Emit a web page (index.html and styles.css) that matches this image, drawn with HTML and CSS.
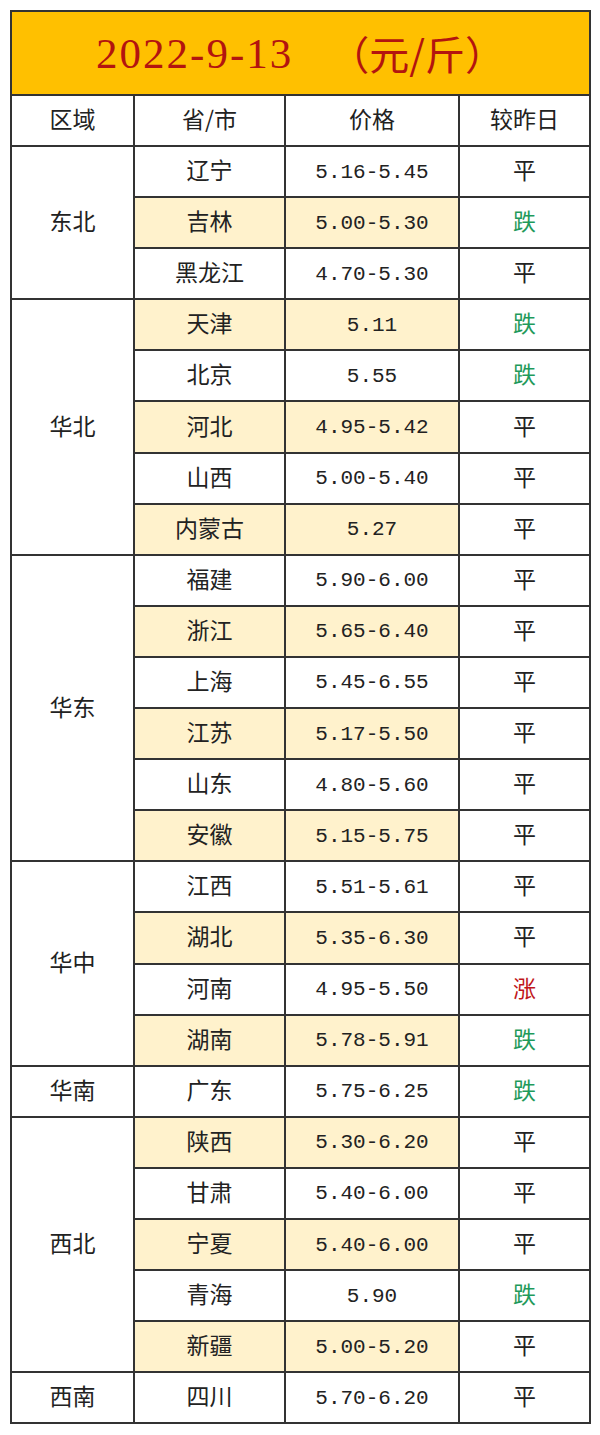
FILE: index.html
```html
<!DOCTYPE html>
<html lang="zh-CN">
<head>
<meta charset="utf-8">
<title>2022-9-13 价格</title>
<link rel="stylesheet" href="styles.css">
</head>
<body>
<table class="price-table">
  <colgroup>
    <col class="c-region">
    <col class="c-prov">
    <col class="c-price">
    <col class="c-change">
  </colgroup>
  <thead>
    <tr class="title-row">
      <th colspan="4"><span class="title"><span class="num">2022-9-13</span><span class="unit">（元/斤）</span></span></th>
    </tr>
    <tr class="head-row">
      <th>区域</th><th>省/市</th><th>价格</th><th>较昨日</th>
    </tr>
  </thead>
  <tbody>
    <tr><td rowspan="3">东北</td><td>辽宁</td><td class="price">5.16-5.45</td><td>平</td></tr>
    <tr class="hl"><td>吉林</td><td class="price">5.00-5.30</td><td class="down">跌</td></tr>
    <tr><td>黑龙江</td><td class="price">4.70-5.30</td><td>平</td></tr>

    <tr class="hl"><td rowspan="5">华北</td><td>天津</td><td class="price">5.11</td><td class="down">跌</td></tr>
    <tr><td>北京</td><td class="price">5.55</td><td class="down">跌</td></tr>
    <tr class="hl"><td>河北</td><td class="price">4.95-5.42</td><td>平</td></tr>
    <tr><td>山西</td><td class="price">5.00-5.40</td><td>平</td></tr>
    <tr class="hl"><td>内蒙古</td><td class="price">5.27</td><td>平</td></tr>

    <tr><td rowspan="6">华东</td><td>福建</td><td class="price">5.90-6.00</td><td>平</td></tr>
    <tr class="hl"><td>浙江</td><td class="price">5.65-6.40</td><td>平</td></tr>
    <tr><td>上海</td><td class="price">5.45-6.55</td><td>平</td></tr>
    <tr class="hl"><td>江苏</td><td class="price">5.17-5.50</td><td>平</td></tr>
    <tr><td>山东</td><td class="price">4.80-5.60</td><td>平</td></tr>
    <tr class="hl"><td>安徽</td><td class="price">5.15-5.75</td><td>平</td></tr>

    <tr><td rowspan="4">华中</td><td>江西</td><td class="price">5.51-5.61</td><td>平</td></tr>
    <tr class="hl"><td>湖北</td><td class="price">5.35-6.30</td><td>平</td></tr>
    <tr><td>河南</td><td class="price">4.95-5.50</td><td class="up">涨</td></tr>
    <tr class="hl"><td>湖南</td><td class="price">5.78-5.91</td><td class="down">跌</td></tr>

    <tr><td>华南</td><td>广东</td><td class="price">5.75-6.25</td><td class="down">跌</td></tr>

    <tr class="hl"><td rowspan="5">西北</td><td>陕西</td><td class="price">5.30-6.20</td><td>平</td></tr>
    <tr><td>甘肃</td><td class="price">5.40-6.00</td><td>平</td></tr>
    <tr class="hl"><td>宁夏</td><td class="price">5.40-6.00</td><td>平</td></tr>
    <tr><td>青海</td><td class="price">5.90</td><td class="down">跌</td></tr>
    <tr class="hl"><td>新疆</td><td class="price">5.00-5.20</td><td>平</td></tr>

    <tr><td>西南</td><td>四川</td><td class="price">5.70-6.20</td><td>平</td></tr>
  </tbody>
</table>
</body>
</html>
```

FILE: styles.css
```css
html, body {
  margin: 0;
  padding: 0;
  background: #ffffff;
}

body {
  padding: 10px 0 0 10px;
  font-family: "Noto Sans CJK SC", "Noto Sans", sans-serif;
  color: #222222;
}

.price-table {
  border-collapse: collapse;
  width: 579px;
  table-layout: fixed;
}

.c-region { width: 123px; }
.c-prov { width: 151px; }
.c-price { width: 174px; }
.c-change { width: 131px; }

.price-table th,
.price-table td {
  border: 2px solid #333333;
  padding: 0 0 4px;
  text-align: center;
  vertical-align: middle;
  font-size: 23px;
  font-weight: 400;
  line-height: 1;
}

.title-row th {
  height: 82px;
  padding: 0;
  background: #ffc000;
}

.title {
  display: inline-flex;
  align-items: center;
  color: #b3140f;
}

.title .num {
  font-family: "Liberation Serif", serif;
  font-size: 43px;
  letter-spacing: 2px;
  margin-right: 36px;
}

.title .unit {
  font-family: "Noto Sans CJK SC", sans-serif;
  font-size: 40px;
}

.head-row th {
  height: 45px;
}

tbody tr {
  height: 51.1px;
}

.price-table .price {
  font-family: "Liberation Mono", monospace;
  font-size: 21px;
  padding: 1px 0 0;
  color: #222222;
}

.hl td:nth-last-child(2),
.hl td:nth-last-child(3) {
  background: #fff2cc;
}

.down {
  color: #1f9a5b;
}

.up {
  color: #c0161a;
}
```
